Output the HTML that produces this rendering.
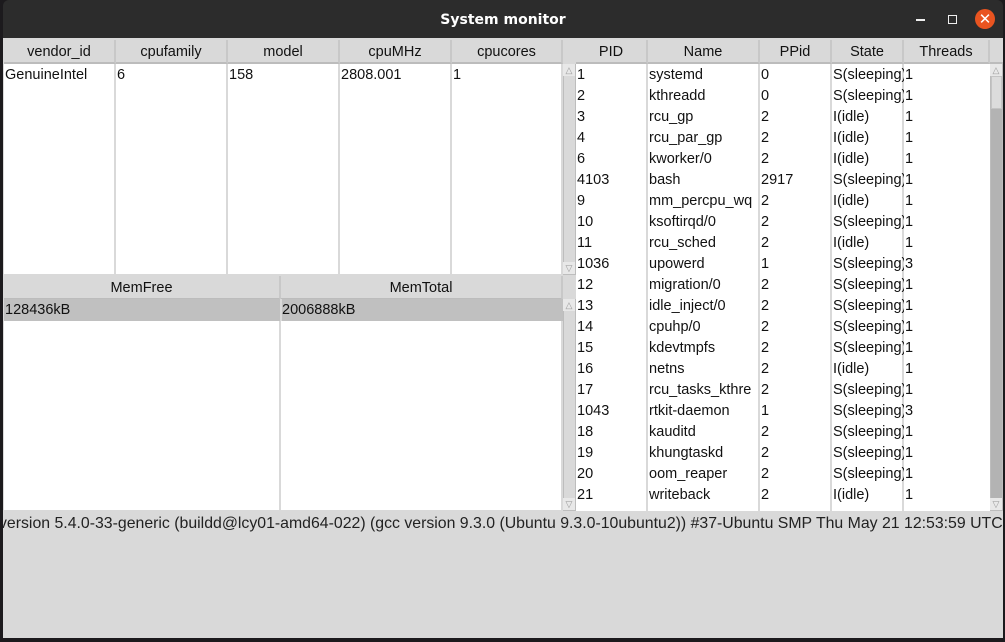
<!DOCTYPE html>
<html><head><meta charset="utf-8"><style>
*{margin:0;padding:0;box-sizing:border-box}
body{width:1005px;height:642px;background:#1c1a1d;position:relative;overflow:hidden;font-family:"Liberation Sans",sans-serif}
.a{position:absolute}
.title{left:3px;top:0;width:1000px;height:38px;background:#2c2c2c;border-radius:6px 6px 0 0;color:#fff;font:bold 14px "DejaVu Sans",sans-serif;text-align:center;line-height:40px}
.win{left:3px;top:38px;width:1000px;height:600px;background:#d9d9d9}
.hd{position:absolute;height:24px;background:#d9d9d9;border-right:2px solid #c8c8c8;border-bottom:2px solid #bcbcbc;font-size:14.5px;text-align:center;line-height:25px;color:#111;white-space:nowrap;overflow:hidden}
.col{position:absolute;background:#fff;border-right:2px solid #d9d9d9}
.cell{position:absolute;font-size:14.5px;color:#111;white-space:nowrap;overflow:hidden;height:21px;line-height:23px;padding-left:1px}
.sb{position:absolute;background:#d9d9d9;border:1px solid #bdbdbd}
.arr{position:absolute;width:12px;height:12px;font-size:9px;color:#999;text-align:center;line-height:12px;background:#e8e8e8}
</style></head><body>
<div class="a title">System monitor
<div class="a" style="right:78px;top:19px;width:9px;height:2px;background:#eee"></div>
<div class="a" style="right:46px;top:15px;width:9px;height:9px;border:1.5px solid #eee"></div>
<div class="a" style="right:8px;top:9px;width:20px;height:20px;border-radius:50%;background:#e95420;color:#fff;font-size:15px;line-height:20px;font-weight:normal">✕</div>
</div>
<div class="a win"></div>

<div class="hd" style="left:4px;top:40px;width:112px">vendor_id</div>
<div class="hd" style="left:116px;top:40px;width:112px">cpufamily</div>
<div class="hd" style="left:228px;top:40px;width:112px">model</div>
<div class="hd" style="left:340px;top:40px;width:112px">cpuMHz</div>
<div class="hd" style="left:452px;top:40px;width:111px">cpucores</div>
<div class="col" style="left:4px;top:64px;width:112px;height:210px"></div>
<div class="col" style="left:116px;top:64px;width:112px;height:210px"></div>
<div class="col" style="left:228px;top:64px;width:112px;height:210px"></div>
<div class="col" style="left:340px;top:64px;width:112px;height:210px"></div>
<div class="col" style="left:452px;top:64px;width:111px;height:210px"></div>
<div class="cell" style="left:4px;top:64px">GenuineIntel</div>
<div class="cell" style="left:116px;top:64px">6</div>
<div class="cell" style="left:228px;top:64px">158</div>
<div class="cell" style="left:340px;top:64px">2808.001</div>
<div class="cell" style="left:452px;top:64px">1</div>
<div class="sb" style="left:563px;top:64px;width:13px;height:211px"></div>
<div class="arr" style="left:563px;top:64px">△</div>
<div class="arr" style="left:563px;top:262px">▽</div>

<div class="hd" style="left:4px;top:276px;width:277px">MemFree</div>
<div class="hd" style="left:281px;top:276px;width:282px">MemTotal</div>
<div class="col" style="left:4px;top:300px;width:277px;height:210px"></div>
<div class="col" style="left:281px;top:300px;width:282px;height:210px"></div>
<div class="a" style="left:4px;top:299px;width:559px;height:22px;background:#c0c0c0"></div>
<div class="cell" style="left:4px;top:299px">128436kB</div>
<div class="cell" style="left:281px;top:299px">2006888kB</div>
<div class="a" style="left:280px;top:299px;width:2px;height:22px;background:#d9d9d9"></div>
<div class="sb" style="left:563px;top:299px;width:13px;height:212px"></div>
<div class="arr" style="left:563px;top:299px">△</div>
<div class="arr" style="left:563px;top:498px">▽</div>

<div class="hd" style="left:576px;top:40px;width:72px">PID</div>
<div class="hd" style="left:648px;top:40px;width:112px">Name</div>
<div class="hd" style="left:760px;top:40px;width:72px">PPid</div>
<div class="hd" style="left:832px;top:40px;width:72px">State</div>
<div class="hd" style="left:904px;top:40px;width:86px">Threads</div>
<div class="hd" style="left:990px;top:40px;width:13px;border-right:none"></div>
<div class="col" style="left:576px;top:64px;width:72px;height:447px"></div>
<div class="col" style="left:648px;top:64px;width:112px;height:447px"></div>
<div class="col" style="left:760px;top:64px;width:72px;height:447px"></div>
<div class="col" style="left:832px;top:64px;width:72px;height:447px"></div>
<div class="col" style="left:904px;top:64px;width:86px;height:447px;border:none"></div>
<div id="rows"></div>
<div class="sb" style="left:990px;top:64px;width:13px;height:447px;background:#b3b3b3"></div>
<div class="a" style="left:991px;top:76px;width:11px;height:33px;background:#dcdcdc;border:1px solid #c4c4c4"></div>
<div class="arr" style="left:990px;top:64px">△</div>
<div class="arr" style="left:990px;top:498px">▽</div>

<div class="a" style="left:-1px;top:512px;width:1004px;height:24px;overflow:hidden;white-space:nowrap;font:15.85px 'Liberation Sans',sans-serif;color:#222;line-height:24px">version 5.4.0-33-generic (buildd@lcy01-amd64-022) (gcc version 9.3.0 (Ubuntu 9.3.0-10ubuntu2)) #37-Ubuntu SMP Thu May 21 12:53:59 UTC 2020</div>
<div class="a" style="left:0;top:512px;width:3px;height:130px;background:#1c1a1d"></div>

<script>
var d=[["1","systemd","0","S(sleeping)","1"],["2","kthreadd","0","S(sleeping)","1"],["3","rcu_gp","2","I(idle)","1"],["4","rcu_par_gp","2","I(idle)","1"],["6","kworker/0","2","I(idle)","1"],["4103","bash","2917","S(sleeping)","1"],["9","mm_percpu_wq","2","I(idle)","1"],["10","ksoftirqd/0","2","S(sleeping)","1"],["11","rcu_sched","2","I(idle)","1"],["1036","upowerd","1","S(sleeping)","3"],["12","migration/0","2","S(sleeping)","1"],["13","idle_inject/0","2","S(sleeping)","1"],["14","cpuhp/0","2","S(sleeping)","1"],["15","kdevtmpfs","2","S(sleeping)","1"],["16","netns","2","I(idle)","1"],["17","rcu_tasks_kthre","2","S(sleeping)","1"],["1043","rtkit-daemon","1","S(sleeping)","3"],["18","kauditd","2","S(sleeping)","1"],["19","khungtaskd","2","S(sleeping)","1"],["20","oom_reaper","2","S(sleeping)","1"],["21","writeback","2","I(idle)","1"]];
var x=[576,648,760,832,904],w=[70,110,70,72,86],h="";
d.forEach(function(r,i){r.forEach(function(c,j){h+='<div class="cell" style="left:'+x[j]+'px;top:'+(64+i*21)+'px;width:'+w[j]+'px">'+c+'</div>';});});
document.getElementById("rows").innerHTML=h;
</script>
</body></html>
